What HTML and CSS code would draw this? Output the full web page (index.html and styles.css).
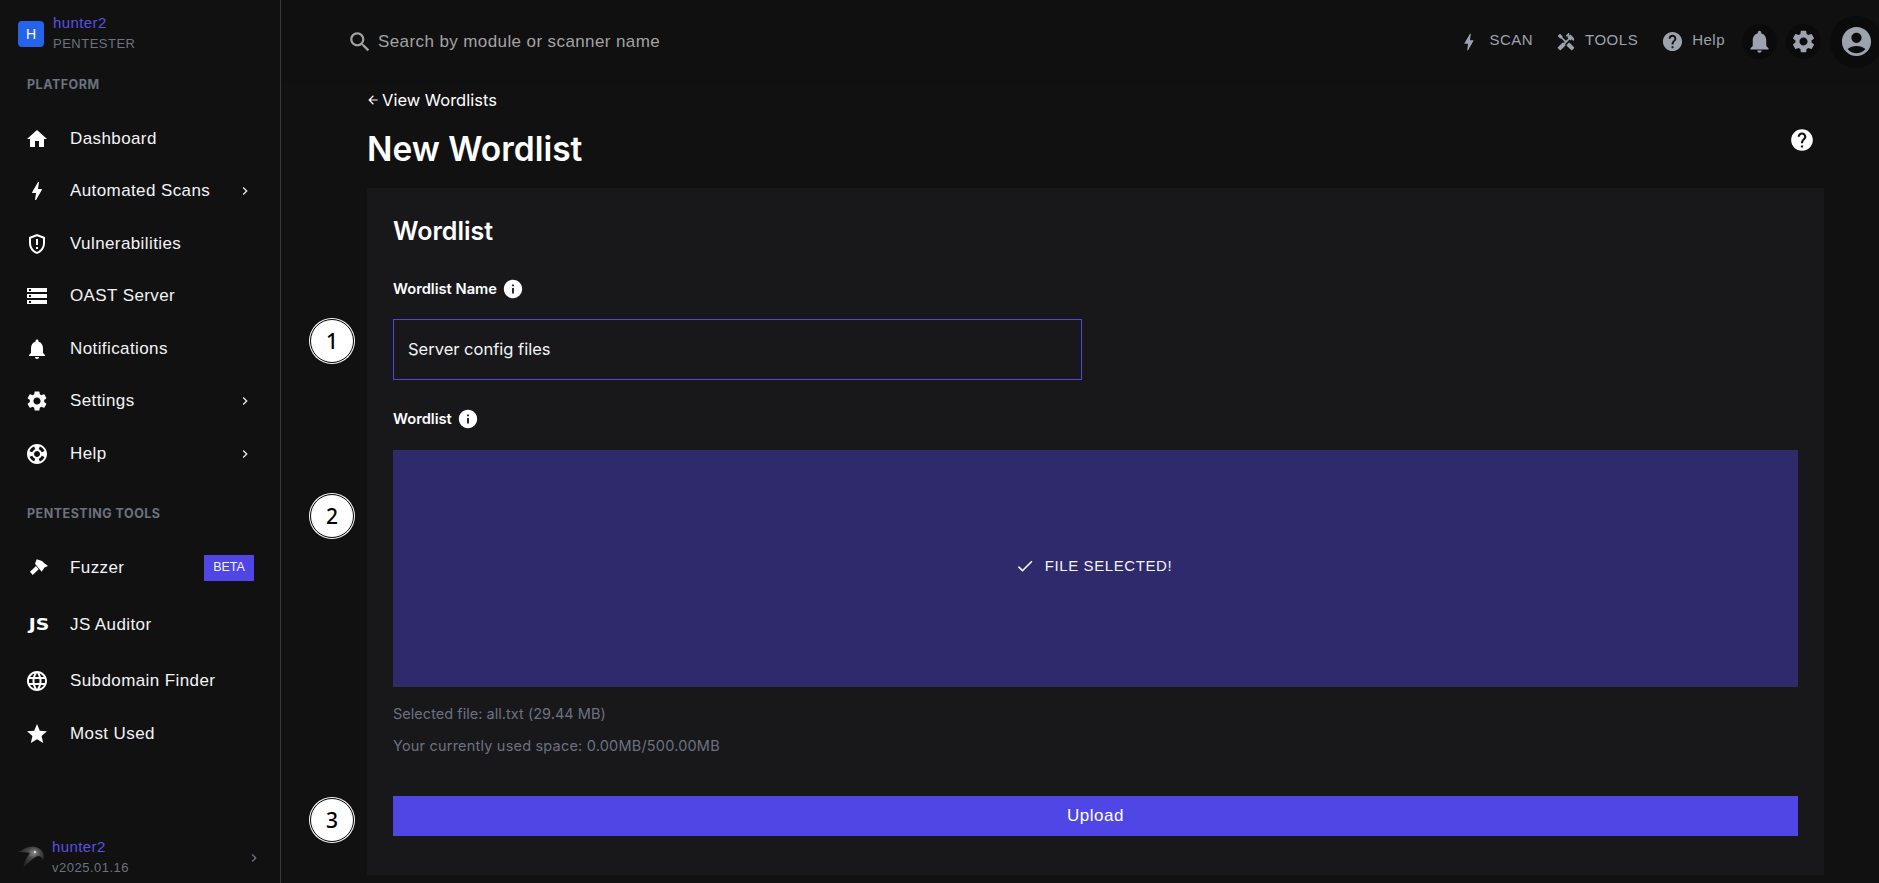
FILE: index.html
```html
<!DOCTYPE html>
<html lang="en">
  <head>
    <meta charset="UTF-8" />
    <meta name="viewport" content="width=device-width, initial-scale=1.0" />
    <title>New Wordlist</title>
    <link rel="stylesheet" href="styles.css">
  </head>
  <body>
    <!-- Icon sprite -->
    <svg class="sprite" xmlns="http://www.w3.org/2000/svg">
      <symbol id="i-home" viewBox="0 0 24 24"><path d="M10 20v-6h4v6h5v-8h3L12 3 2 12h3v8z"/></symbol>
      <symbol id="i-bolt" viewBox="0 0 24 24"><path d="M11 21h-1l1-7H7.5c-.58 0-.57-.32-.38-.66.19-.34.05-.08.07-.12C8.48 10.94 10.42 7.54 13 3h1l-1 7h3.5c.49 0 .56.33.47.51l-.07.15C12.96 17.55 11 21 11 21z"/></symbol>
      <symbol id="i-shield" viewBox="0 0 24 24"><path d="M12 2L4 5v6.09c0 5.05 3.41 9.76 8 10.91 4.59-1.15 8-5.86 8-10.91V5l-8-3zm6 9.09c0 4-2.55 7.7-6 8.83-3.45-1.13-6-4.82-6-8.83v-4.7l6-2.25 6 2.25v4.7zM11 15h2v2h-2zm0-8h2v6h-2z"/></symbol>
      <symbol id="i-storage" viewBox="0 0 24 24"><path d="M2 20h20v-4H2v4zm2-3h2v2H4v-2zM2 4v4h20V4H2zm4 3H4V5h2v2zm-4 7h20v-4H2v4zm2-3h2v2H4v-2z"/></symbol>
      <symbol id="i-bell" viewBox="0 0 24 24"><path d="M12 22c1.1 0 2-.9 2-2h-4c0 1.1.89 2 2 2zm6-6v-5c0-3.07-1.64-5.64-4.5-6.32V4c0-.83-.67-1.5-1.5-1.5s-1.5.67-1.5 1.5v.68C7.63 5.36 6 7.92 6 11v5l-2 2v1h16v-1l-2-2z"/></symbol>
      <symbol id="i-gear" viewBox="0 0 24 24"><path d="M19.14 12.94c.04-.3.06-.61.06-.94 0-.32-.02-.64-.07-.94l2.03-1.58c.18-.14.23-.41.12-.61l-1.92-3.32c-.12-.22-.37-.29-.59-.22l-2.39.96c-.5-.38-1.03-.7-1.62-.94l-.36-2.54c-.04-.24-.24-.41-.48-.41h-3.84c-.24 0-.43.17-.47.41l-.36 2.54c-.59.24-1.13.57-1.62.94l-2.39-.96c-.22-.08-.47 0-.59.22L2.74 8.87c-.12.21-.08.47.12.61l2.03 1.58c-.05.3-.09.63-.09.94s.02.64.07.94l-2.03 1.58c-.18.14-.23.41-.12.61l1.92 3.32c.12.22.37.29.59.22l2.39-.96c.5.38 1.03.7 1.62.94l.36 2.54c.05.24.24.41.48.41h3.84c.24 0 .44-.17.47-.41l.36-2.54c.59-.24 1.13-.56 1.62-.94l2.39.96c.22.08.47 0 .59-.22l1.92-3.32c.12-.22.07-.47-.12-.61l-2.01-1.58zM12 15.6c-1.98 0-3.6-1.62-3.6-3.6s1.62-3.6 3.6-3.6 3.6 1.62 3.6 3.6-1.62 3.6-3.6 3.6z"/></symbol>
      <symbol id="i-support" viewBox="0 0 24 24"><path d="M12 2C6.48 2 2 6.48 2 12s4.48 10 10 10 10-4.48 10-10S17.52 2 12 2zm7.46 7.12l-2.78 1.15c-.51-1.36-1.58-2.44-2.95-2.94l1.15-2.78c2.1.8 3.77 2.47 4.58 4.57zM12 15c-1.66 0-3-1.34-3-3s1.34-3 3-3 3 1.34 3 3-1.34 3-3 3zM9.13 4.54l1.17 2.78c-1.38.5-2.47 1.59-2.98 2.97L4.54 9.13c.81-2.11 2.48-3.78 4.59-4.59zM4.54 14.87l2.78-1.15c.51 1.38 1.59 2.46 2.97 2.96l-1.17 2.78c-2.1-.81-3.77-2.48-4.58-4.59zm10.34 4.59l-1.15-2.78c1.37-.51 2.45-1.59 2.95-2.97l2.78 1.17c-.81 2.1-2.48 3.77-4.58 4.58z"/></symbol>
      <symbol id="i-hammer" viewBox="0 0 24 24"><path d="M11.7 3.3L17 5l2 2 4 3-3.5 1.5-2.8 4.2L10 7.7zM11 10l2.7 3.3-6 5.7L5 15.7z"/></symbol>
      <symbol id="i-globe" viewBox="0 0 24 24"><path d="M11.99 2C6.47 2 2 6.48 2 12s4.47 10 9.99 10C17.52 22 22 17.52 22 12S17.52 2 11.99 2zm6.93 6h-2.95c-.32-1.25-.78-2.45-1.38-3.56 1.84.63 3.37 1.91 4.33 3.56zM12 4.04c.83 1.2 1.48 2.53 1.91 3.96h-3.82c.43-1.43 1.08-2.76 1.91-3.96zM4.26 14C4.1 13.36 4 12.69 4 12s.1-1.36.26-2h3.38c-.08.66-.14 1.32-.14 2 0 .68.06 1.34.14 2H4.26zm.82 2h2.95c.32 1.25.78 2.45 1.38 3.56-1.84-.63-3.37-1.9-4.33-3.56zm2.95-8H5.08c.96-1.66 2.49-2.93 4.33-3.56C8.81 5.55 8.35 6.75 8.03 8zM12 19.96c-.83-1.2-1.48-2.53-1.91-3.96h3.82c-.43 1.43-1.08 2.76-1.91 3.96zM14.34 14H9.66c-.09-.66-.16-1.32-.16-2 0-.68.07-1.35.16-2h4.68c.09.65.16 1.32.16 2 0 .68-.07 1.34-.16 2zm.25 5.56c.6-1.11 1.06-2.31 1.38-3.56h2.95c-.96 1.65-2.49 2.93-4.33 3.56zM16.36 14c.08-.66.14-1.32.14-2 0-.68-.06-1.34-.14-2h3.38c.16.64.26 1.31.26 2s-.1 1.36-.26 2h-3.38z"/></symbol>
      <symbol id="i-star" viewBox="0 0 24 24"><path d="M12 17.27L18.18 21l-1.64-7.03L22 9.24l-7.19-.61L12 2 9.19 8.63 2 9.24l5.46 4.73L5.82 21z"/></symbol>
      <symbol id="i-chevron" viewBox="0 0 24 24"><path d="M10 6L8.59 7.41 13.17 12l-4.58 4.59L10 18l6-6z"/></symbol>
      <symbol id="i-search" viewBox="0 0 24 24"><path d="M15.5 14h-.79l-.28-.27C15.41 12.59 16 11.11 16 9.5 16 5.91 13.09 3 9.5 3S3 5.91 3 9.5 5.91 16 9.5 16c1.61 0 3.09-.59 4.23-1.57l.27.28v.79l5 4.99L20.49 19l-4.99-5zm-6 0C7.01 14 5 11.99 5 9.5S7.01 5 9.5 5 14 7.01 14 9.5 11.99 14 9.5 14z"/></symbol>
      <symbol id="i-tools" viewBox="0 0 24 24"><path d="M21.67 18.17l-5.3-5.3h-.99l-2.54 2.54v.99l5.3 5.3c.39.39 1.02.39 1.41 0l2.12-2.12c.39-.38.39-1.02 0-1.41z"/><path d="M17.34 10.19l1.41-1.41 2.12 2.12c1.17-1.17 1.17-3.07 0-4.24l-3.54-3.54-1.41 1.41V1.71l-.7-.71-3.54 3.54.71.71h2.83l-1.41 1.41 1.06 1.06-2.89 2.89-4.13-4.13V5.06L4.83 2.04 2 4.87 5.03 7.9h1.41l4.13 4.13-.85.85H7.6l-5.3 5.3c-.39.39-.39 1.02 0 1.41l2.12 2.12c.39.39 1.02.39 1.41 0l5.3-5.3v-2.12l5.15-5.15 1.06 1.05z"/></symbol>
      <symbol id="i-help" viewBox="0 0 24 24"><path d="M12 2C6.48 2 2 6.48 2 12s4.48 10 10 10 10-4.48 10-10S17.52 2 12 2zm1 17h-2v-2h2v2zm2.07-7.75l-.9.92C13.45 12.9 13 13.5 13 15h-2v-.5c0-1.1.45-2.1 1.17-2.83l1.24-1.26c.37-.36.59-.86.59-1.41 0-1.1-.9-2-2-2s-2 .9-2 2H8c0-2.21 1.79-4 4-4s4 1.79 4 4c0 .88-.36 1.68-.93 2.25z"/></symbol>
      <symbol id="i-account" viewBox="0 0 24 24"><path d="M12 2C6.48 2 2 6.48 2 12s4.48 10 10 10 10-4.48 10-10S17.52 2 12 2zm0 4c1.93 0 3.5 1.57 3.5 3.5S13.93 13 12 13s-3.5-1.57-3.5-3.5S10.07 6 12 6zm0 14c-2.03 0-4.43-.82-6.14-2.88C7.55 15.8 9.68 15 12 15s4.45.8 6.14 2.12C16.43 19.18 14.03 20 12 20z"/></symbol>
      <symbol id="i-info" viewBox="0 0 24 24"><path d="M12 2C6.48 2 2 6.48 2 12s4.48 10 10 10 10-4.48 10-10S17.52 2 12 2zm1 15h-2v-6h2v6zm0-8h-2V7h2v2z"/></symbol>
      <symbol id="i-check" viewBox="0 0 24 24"><path d="M9 16.17L4.83 12l-1.41 1.41L9 19 21 7l-1.41-1.41z"/></symbol>
      <symbol id="i-back" viewBox="0 0 24 24"><path d="M20 11H7.83l5.59-5.59L12 4l-8 8 8 8 1.41-1.41L7.83 13H20v-2z"/></symbol>
    </svg>

    <div class="app">
      <aside class="sidebar">
        <div class="brand">
          <span class="brand-badge">H</span>
          <div class="brand-text">
            <div class="user-name">hunter2</div>
            <div class="user-sub">PENTESTER</div>
          </div>
        </div>

        <div class="nav-title">PLATFORM</div>
        <nav class="nav nav-platform">
          <a class="nav-item"><svg class="nav-icon"><use href="#i-home"/></svg><span class="nav-label">Dashboard</span></a>
          <a class="nav-item"><svg class="nav-icon"><use href="#i-bolt"/></svg><span class="nav-label">Automated Scans</span><svg class="nav-chevron"><use href="#i-chevron"/></svg></a>
          <a class="nav-item"><svg class="nav-icon"><use href="#i-shield"/></svg><span class="nav-label">Vulnerabilities</span></a>
          <a class="nav-item"><svg class="nav-icon"><use href="#i-storage"/></svg><span class="nav-label">OAST Server</span></a>
          <a class="nav-item"><svg class="nav-icon"><use href="#i-bell"/></svg><span class="nav-label">Notifications</span></a>
          <a class="nav-item"><svg class="nav-icon"><use href="#i-gear"/></svg><span class="nav-label">Settings</span><svg class="nav-chevron"><use href="#i-chevron"/></svg></a>
          <a class="nav-item"><svg class="nav-icon"><use href="#i-support"/></svg><span class="nav-label">Help</span><svg class="nav-chevron"><use href="#i-chevron"/></svg></a>
        </nav>

        <div class="nav-title nav-title-tools">PENTESTING TOOLS</div>
        <nav class="nav nav-tools">
          <a class="nav-item tool-fuzzer"><svg class="nav-icon"><use href="#i-hammer"/></svg><span class="nav-label">Fuzzer</span><span class="beta">BETA</span></a>
          <a class="nav-item tool-js"><span class="nav-icon js-icon">JS</span><span class="nav-label">JS Auditor</span></a>
          <a class="nav-item tool-domain"><svg class="nav-icon"><use href="#i-globe"/></svg><span class="nav-label">Subdomain Finder</span></a>
          <a class="nav-item tool-used"><svg class="nav-icon"><use href="#i-star"/></svg><span class="nav-label">Most Used</span></a>
        </nav>

        <div class="side-foot">
          <svg class="bird" viewBox="0 0 26 26">
            <defs>
              <radialGradient id="birdfill" cx="0.62" cy="0.3" r="0.75">
                <stop offset="0" stop-color="#8a8a8a"/>
                <stop offset="0.35" stop-color="#444444"/>
                <stop offset="1" stop-color="#1d1d1d"/>
              </radialGradient>
            </defs>
            <path d="M0 7 C6 4 12 0 18 2 C24 4 27 9 25 15 C24 12 22 11 20 11 C16 12 10 18 5 23 C7 16 9 11 12 8 C8 7 4 7 0 7z" fill="url(#birdfill)"/>
            <circle cx="17" cy="7" r="1.2" fill="#d8d8d8"/>
          </svg>
          <div class="brand-text">
            <div class="user-name">hunter2</div>
            <div class="user-sub">v2025.01.16</div>
          </div>
          <svg class="foot-chevron"><use href="#i-chevron"/></svg>
        </div>
      </aside>

      <div class="main">
        <header class="topbar">
          <div class="search">
            <svg class="search-icon"><use href="#i-search"/></svg>
            <span>Search by module or scanner name</span>
          </div>
          <div class="top-links">
            <a class="top-link"><svg><use href="#i-bolt"/></svg><span>SCAN</span></a>
            <a class="top-link top-tools"><svg><use href="#i-tools"/></svg><span>TOOLS</span></a>
            <a class="top-link top-help"><svg><use href="#i-help"/></svg><span>Help</span></a>
            <span class="round-btn"><svg><use href="#i-bell"/></svg></span>
            <span class="round-btn"><svg><use href="#i-gear"/></svg></span>
            <span class="round-account"><svg><use href="#i-account"/></svg></span>
          </div>
        </header>

        <main class="content">
          <a class="back-link"><svg><use href="#i-back"/></svg>View Wordlists</a>
          <div class="title-row">
            <h1>New Wordlist</h1>
            <svg class="title-help"><use href="#i-help"/></svg>
          </div>

          <section class="panel">
            <h2>Wordlist</h2>

            <label class="field-label">Wordlist Name <svg><use href="#i-info"/></svg></label>
            <div class="text-input"><span>Server config files</span></div>

            <label class="field-label field-label-file">Wordlist <svg><use href="#i-info"/></svg></label>
            <div class="dropzone">
              <svg><use href="#i-check"/></svg>
              <span>FILE SELECTED!</span>
            </div>

            <p class="hint hint-first">Selected file: all.txt (29.44 MB)</p>
            <p class="hint hint-used">Your currently used space: 0.00MB/500.00MB</p>

            <button class="upload-btn">Upload</button>
          </section>
        </main>
      </div>
    </div>

    <!-- Step markers drawn over the page -->
    <span class="step step-1">1</span>
    <span class="step step-2">2</span>
    <span class="step step-3">3</span>
  </body>
</html>
```

FILE: styles.css
```css
* {
  box-sizing: border-box;
}
html,
body {
  height: 100%;
}
body {
  margin: 0;
  background-color: #111111;
  color: #fff;
  font-family: "Liberation Sans", Arial, sans-serif;
  overflow: hidden;
}
.sprite {
  display: none;
}
svg {
  fill: currentColor;
}
.app {
  display: flex;
  height: 883px;
}

/* Sidebar */
.sidebar {
  width: 281px;
  flex: none;
  display: flex;
  flex-direction: column;
  border-right: 1px solid #3a3a3d;
}
.brand {
  display: flex;
  align-items: center;
  gap: 9px;
  padding: 13px 0 0 18px;
}
.brand-badge {
  width: 26px;
  height: 26px;
  border-radius: 4px;
  background-color: #2563eb;
  font-size: 14px;
  display: flex;
  align-items: center;
  justify-content: center;
}
.user-name {
  color: #5a50e6;
  font-size: 15px;
  line-height: 20px;
  letter-spacing: 0.4px;
}
.user-sub {
  color: #6b7280;
  font-size: 13px;
  line-height: 20px;
  letter-spacing: 0.5px;
  margin-top: 1px;
}
.nav-title {
  font-family: "Inter", sans-serif;
  font-weight: 700;
  color: #6b7280;
  font-size: 12.5px;
  line-height: 16px;
  letter-spacing: 0.5px;
  padding-left: 27px;
  margin-top: 23px;
}
.nav-title-tools {
  margin-top: 25.5px;
}
.nav {
  display: flex;
  flex-direction: column;
}
.nav-platform {
  margin-top: 19.5px;
}
.nav-tools {
  margin-top: 18px;
}
.nav-item {
  display: flex;
  align-items: center;
  height: 52.5px;
  padding: 0 27px 0 25px;
  font-size: 17px;
  letter-spacing: 0.4px;
  color: #f3f4f6;
}
.tool-fuzzer {
  height: 56px;
}
.tool-js {
  height: 58px;
}
.tool-domain {
  height: 54px;
}
.tool-used {
  height: 52px;
}
.nav-icon {
  width: 24px;
  height: 24px;
  flex: none;
  margin-right: 21px;
  color: #fff;
}
.nav-label {
  flex: 1;
}
.nav-chevron {
  width: 16px;
  height: 16px;
  color: #e5e7eb;
}
.js-icon {
  font-family: "DejaVu Sans", sans-serif;
  font-weight: 700;
  font-size: 15px;
  line-height: 24px;
  letter-spacing: 0;
  text-align: center;
  transform: translateX(2px) scaleX(1.25);
}
.beta {
  background-color: #4f46e5;
  font-size: 12.5px;
  width: 50px;
  height: 26px;
  margin-right: -1px;
  line-height: 24px;
  text-align: center;
  letter-spacing: 0;
}
.side-foot {
  margin-top: auto;
  display: flex;
  align-items: center;
  gap: 8px;
  padding: 0 0 5px 18px;
}
.bird {
  width: 26px;
  height: 26px;
  flex: none;
}
.foot-chevron {
  width: 16px;
  height: 16px;
  color: #6b7280;
  margin-left: auto;
  margin-right: 18px;
}

/* Top bar */
.main {
  flex: 1;
  min-width: 0;
  display: flex;
  flex-direction: column;
}
.topbar {
  height: 86px;
  flex: none;
  display: flex;
  align-items: center;
  justify-content: space-between;
  background-color: #101010;
  padding: 0 0 3px 66px;
}
.search {
  display: flex;
  align-items: center;
  gap: 5px;
  color: #a3a3a3;
  font-size: 17px;
  letter-spacing: 0.4px;
}
.search-icon {
  width: 26px;
  height: 26px;
}
.top-links {
  display: flex;
  align-items: center;
  margin-right: -3px;
}
.top-link {
  display: flex;
  align-items: center;
  gap: 9px;
  color: #9ca3af;
  font-size: 15px;
  letter-spacing: 0.5px;
  margin-right: 23px;
}
.top-link span {
  padding-bottom: 5px;
}
.top-link svg {
  width: 22px;
  height: 22px;
}
.top-link.top-tools svg {
  width: 20px;
  height: 20px;
}
.top-link.top-help {
  gap: 8px;
  margin-right: 17px;
}
.top-link.top-help svg {
  width: 23px;
  height: 23px;
}
.round-btn {
  width: 35px;
  height: 35px;
  border-radius: 50%;
  background-color: #0b0b0b;
  color: #9ca3af;
  display: flex;
  align-items: center;
  justify-content: center;
  margin-right: 9px;
}
.round-btn svg {
  width: 27px;
  height: 27px;
}
.round-account {
  width: 52px;
  height: 52px;
  border-radius: 50%;
  background-color: #0b0b0b;
  color: #9ca3af;
  display: flex;
  align-items: center;
  justify-content: center;
}
.round-account svg {
  width: 35px;
  height: 35px;
}

/* Content */
.content {
  flex: 1;
  padding: 0 55px 8px 86px;
  display: flex;
  flex-direction: column;
  min-height: 0;
}
.back-link {
  display: flex;
  align-items: center;
  gap: 2px;
  font-family: "Inter", sans-serif;
  font-size: 16.5px;
  line-height: 28px;
}
.back-link svg {
  width: 14px;
  height: 14px;
  margin-left: -1px;
}
.title-row {
  display: flex;
  align-items: center;
  justify-content: space-between;
  margin-top: 10px;
  height: 50px;
}
h1 {
  margin: 0;
  font-family: "Inter", sans-serif;
  font-weight: 600;
  font-size: 33.5px;
  line-height: 48px;
}
.title-help {
  width: 26px;
  height: 26px;
  margin: -18px 9px 0 0;
}
.panel {
  flex: 1;
  margin-top: 14px;
  background-color: #18181b;
  padding: 26px 26px 0;
}
h2 {
  margin: 0;
  font-family: "Inter", sans-serif;
  font-weight: 600;
  font-size: 25px;
  line-height: 34px;
}
.field-label {
  display: flex;
  align-items: center;
  gap: 5px;
  font-family: "Inter", sans-serif;
  font-weight: 600;
  font-size: 14.7px;
  line-height: 20px;
  margin-top: 30px;
}
.field-label svg {
  width: 22px;
  height: 22px;
}
.field-label-file {
  margin-top: 28px;
}
.text-input {
  width: 689px;
  height: 61px;
  margin-top: 19px;
  border: 1px solid #4f46e5;
  padding: 0 14px 2px;
  display: flex;
  align-items: center;
  font-family: "Inter", sans-serif;
  font-size: 16.5px;
  color: #f3f4f6;
}
.dropzone {
  height: 237px;
  margin-top: 20px;
  padding: 0 4px 6px 0;
  background-color: #2f2a6b;
  display: flex;
  align-items: center;
  justify-content: center;
  gap: 10px;
  font-size: 15px;
  letter-spacing: 0.6px;
  color: #f3f4f6;
}
.dropzone svg {
  width: 20px;
  height: 20px;
}
.hint {
  margin: 10px 0 0;
  font-family: "Inter", sans-serif;
  color: #6b7280;
  font-size: 14.5px;
  line-height: 22px;
}
.hint-first {
  margin-top: 16px;
  letter-spacing: 0.03px;
}
.hint-used {
  letter-spacing: 0.2px;
}
.upload-btn {
  display: block;
  width: 100%;
  height: 40px;
  margin-top: 39px;
  border: 0;
  background-color: #4f46e5;
  color: #fff;
  font-family: "Liberation Sans", Arial, sans-serif;
  font-size: 17px;
  letter-spacing: 0.5px;
}

/* Step markers */
.step {
  position: absolute;
  left: 310px;
  width: 44px;
  height: 44px;
  border-radius: 50%;
  background-color: #fff;
  border: 1px solid #000;
  box-shadow: 0 0 0 1px #fff;
  color: #000;
  font-family: "Noto Sans", sans-serif;
  font-size: 21px;
  font-weight: 500;
  display: flex;
  align-items: center;
  justify-content: center;
}
.step-1 {
  top: 319px;
}
.step-2 {
  top: 494px;
}
.step-3 {
  top: 798px;
}
```
